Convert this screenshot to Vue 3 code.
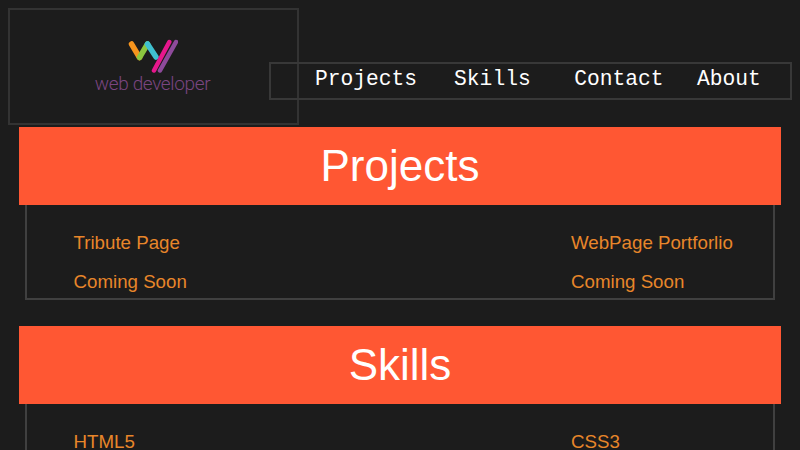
<template>
  <div class="page">
    <header class="top">
      <div class="logo-box">
        <svg class="logo-mark" width="50" height="34" viewBox="0 0 50 34">
          <g fill="none" stroke-linecap="round" stroke-width="5.5">
            <path d="M3.5 5 L11.5 18.5" stroke="#f7941d" />
            <path d="M11.5 18.5 L19.5 5" stroke="#8cc63f" />
            <path d="M19.5 5 L28 18" stroke="#3fc1d0" />
            <path d="M41.3 3 L26 31.5" stroke="#e6178c" stroke-width="4.5" />
            <path d="M48 3 L32 31.5" stroke="#8e4a9b" stroke-width="4.5" />
          </g>
        </svg>
        <span class="logo-text">web developer</span>
      </div>
      <nav class="nav">
        <a class="nav-link" v-for="link in links" :key="link" :class="'nav-' + link.toLowerCase()">{{ link }}</a>
      </nav>
    </header>

    <section class="block" v-for="block in blocks" :key="block.title">
      <h2 class="block-title">{{ block.title }}</h2>
      <div class="block-body">
        <div class="row" v-for="(row, i) in block.rows" :key="i">
          <span class="item">{{ row[0] }}</span>
          <span class="item">{{ row[1] }}</span>
        </div>
      </div>
    </section>
  </div>
</template>

<script setup>
const links = ['Projects', 'Skills', 'Contact', 'About']

const blocks = [
  {
    title: 'Projects',
    rows: [
      ['Tribute Page', 'WebPage Portforlio'],
      ['Coming Soon', 'Coming Soon']
    ]
  },
  {
    title: 'Skills',
    rows: [['HTML5', 'CSS3']]
  }
]
</script>

<style>
html,
body {
  background: #1c1c1c;
  overflow: hidden;
}
</style>

<style scoped>
.page {
  box-sizing: border-box;
  height: 450px;
  overflow: hidden;
  font-family: "Liberation Sans", Arial, sans-serif;
  background: #1c1c1c;
  padding: 8px 8px 0;
}

.top {
  display: flex;
  align-items: flex-start;
}

.logo-box {
  box-sizing: border-box;
  flex: none;
  width: 291px;
  height: 117px;
  border: 2px solid #333;
  display: flex;
  flex-direction: column;
  align-items: center;
  padding-top: 29px;
  padding-right: 2px;
}

.logo-mark {
  display: block;
}

.logo-text {
  font-family: Roboto, sans-serif;
  font-weight: 300;
  font-size: 19px;
  letter-spacing: -0.35px;
  line-height: 22px;
  color: #7a4580;
}

.nav {
  box-sizing: border-box;
  flex: 1;
  height: 38px;
  margin: 54px 0 0 -30px;
  border: 2px solid #383838;
  display: flex;
  align-items: center;
  font-family: "Liberation Mono", monospace;
  font-size: 21.28px;
  color: #fff;
  padding-left: 44px;
  padding-bottom: 5px;
}

.nav-skills {
  margin-left: 37px;
}

.nav-contact {
  margin-left: 43.5px;
}

.nav-about {
  margin-left: 33.5px;
}

.block {
  margin: 2px 11px 0;
}

.block + .block {
  margin-top: 26px;
}

.block-title {
  margin: 0;
  height: 78px;
  line-height: 78px;
  background: #ff5733;
  color: #fff;
  font-size: 44px;
  font-weight: 400;
  text-align: center;
}

.block-body {
  box-sizing: border-box;
  margin: 0 6px;
  height: 95px;
  border: 2px solid #404040;
  border-top: 0;
  padding: 18px 0 0 46.5px;
}

.block + .block .block-body {
  height: 140px;
}

.row {
  display: grid;
  grid-template-columns: 497.5px 1fr;
  height: 39px;
  line-height: 39px;
}

.item {
  font-size: 18.72px;
  color: #e8862a;
}
</style>
